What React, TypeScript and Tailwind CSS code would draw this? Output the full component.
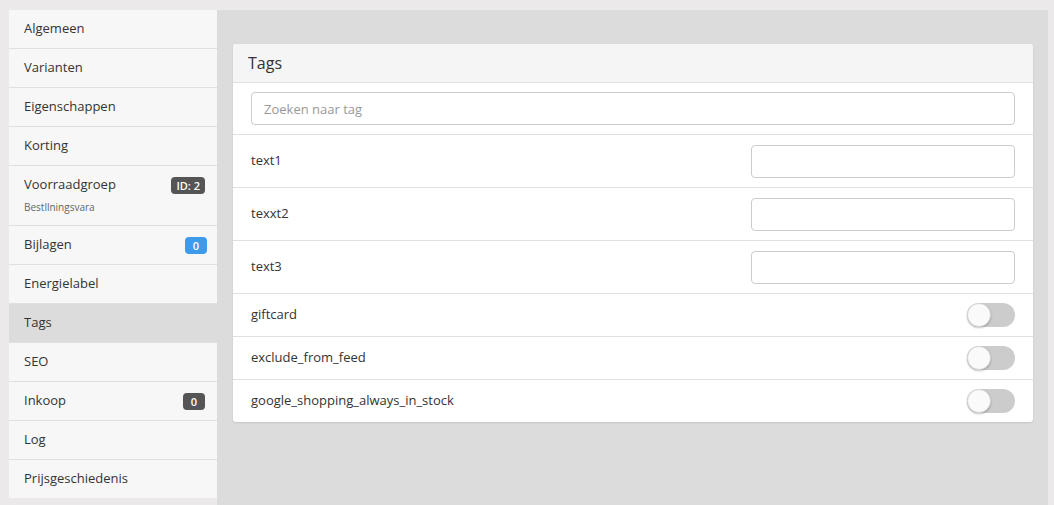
import React from 'react';

type NavItem = {
  label: string;
  sub?: string;
  badge?: { text: string; tone: 'dark' | 'blue' };
  active?: boolean;
};

const navItems: NavItem[] = [
  { label: 'Algemeen' },
  { label: 'Varianten' },
  { label: 'Eigenschappen' },
  { label: 'Korting' },
  { label: 'Voorraadgroep', sub: 'Bestllningsvara', badge: { text: 'ID: 2', tone: 'dark' } },
  { label: 'Bijlagen', badge: { text: '0', tone: 'blue' } },
  { label: 'Energielabel' },
  { label: 'Tags', active: true },
  { label: 'SEO' },
  { label: 'Inkoop', badge: { text: '0', tone: 'dark' } },
  { label: 'Log' },
  { label: 'Prijsgeschiedenis' },
];

const textTags = ['text1', 'texxt2', 'text3'];
const boolTags = ['giftcard', 'exclude_from_feed', 'google_shopping_always_in_stock'];

const Toggle = () => (
  <div className="relative h-6 w-12 rounded-full bg-[#cccccc]">
    <div className="absolute left-0 top-0 h-6 w-6 rounded-full border border-[#d6d6d6] bg-[#fafafa] shadow-[0_1px_2px_rgba(0,0,0,0.25)]" />
  </div>
);

export default function App() {
  return (
    <div
      className="flex min-h-[505px] bg-[#ebe9e9] pl-[9px] pr-[6px] pt-[10px] text-[13px] text-[#333]"
      style={{ fontFamily: '"Open Sans", "Liberation Sans", sans-serif' }}
    >
      {/* Sidebar */}
      <div className="w-[208px] shrink-0 self-start">
        {navItems.map((item, i) => (
          <div
            key={item.label}
            className={`pl-[15px] pr-[12px] ${item.active ? 'bg-[#dcdcdc]' : 'bg-[#f7f7f7]'} ${
              i < navItems.length - 1 ? 'border-b border-[#e0e0e0]' : ''
            } ${item.sub ? 'pb-[12px] pt-[10px]' : 'py-[10px]'}`}
          >
            <div className="flex h-[18px] items-center justify-between">
              <span>{item.label}</span>
              {item.badge && (
                <span
                  className={`min-w-[22px] rounded-[4px] px-[5px] text-center text-[11px] font-semibold leading-[17px] text-white ${
                    item.badge.tone === 'blue' ? 'mr-[-2px] bg-[#3d9be9]' : 'bg-[#555555]'
                  }`}
                >
                  {item.badge.text}
                </span>
              )}
            </div>
            {item.sub && <div className="mt-[7px] text-[10px] leading-[12px] text-[#666]">{item.sub}</div>}
          </div>
        ))}
      </div>

      {/* Main */}
      <div className="flex-1 bg-[#dcdcdc] pl-4 pr-[15px] pt-[34px]">
        <div className="overflow-hidden rounded-[3px] bg-white shadow-[0_1px_2px_rgba(0,0,0,0.1)]">
          <div className="flex h-[39px] items-center border-b border-[#e0e0e0] bg-[#f5f5f5] px-[15px] text-[16px] text-[#333]">
            Tags
          </div>

          <div className="border-b border-[#e0e0e0] px-[18px] py-[9px]">
            <input
              placeholder="Zoeken naar tag"
              className="h-[33px] w-full rounded-[4px] border border-[#cccccc] px-3 text-[13px] text-[#333] outline-none placeholder:text-[#999]"
            />
          </div>

          {textTags.map((t) => (
            <div key={t} className="flex h-[53px] items-center justify-between border-b border-[#e0e0e0] px-[18px]">
              <span>{t}</span>
              <input className="h-[33px] w-[264px] rounded-[4px] border border-[#cccccc] px-3 outline-none" />
            </div>
          ))}

          {boolTags.map((t, i) => (
            <div
              key={t}
              className={`flex items-center justify-between px-[18px] ${
                i < boolTags.length - 1 ? 'h-[43px] border-b border-[#e0e0e0]' : 'h-[42px]'
              }`}
            >
              <span>{t}</span>
              <Toggle />
            </div>
          ))}
        </div>
      </div>
    </div>
  );
}
